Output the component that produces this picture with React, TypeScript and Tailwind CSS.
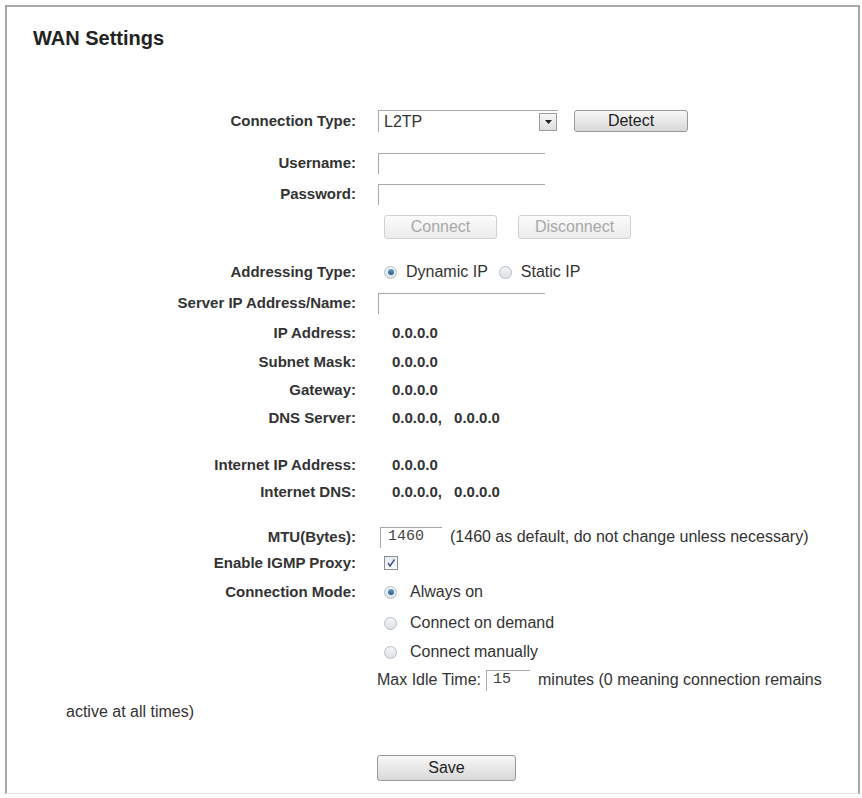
import React from "react";

const font = { fontFamily: '"Liberation Sans", Arial, sans-serif' };
const mono = { fontFamily: '"Liberation Mono", "Courier New", monospace' };

function Label({ children }: { children: React.ReactNode }) {
  return (
    <div className="w-[349px] shrink-0 text-right text-[15px] font-bold text-[#333]">
      {children}
    </div>
  );
}

function Row({
  label,
  children,
  className = "",
}: {
  label?: React.ReactNode;
  children?: React.ReactNode;
  className?: string;
}) {
  return (
    <div className={`flex h-6 items-center ${className}`}>
      <Label>{label}</Label>
      <div className="ml-[22px] flex items-center text-[16px] text-[#333]">{children}</div>
    </div>
  );
}

function Radio({ checked = false }: { checked?: boolean }) {
  return (
    <span className="flex h-[13px] w-[13px] shrink-0 items-center justify-center rounded-full border border-[#b4bec8] bg-gradient-to-b from-[#f4f4f4] to-[#dde2e6]">
      {checked && (
        <span className="h-[6px] w-[6px] rounded-full bg-gradient-to-b from-[#6a9cc6] to-[#2a5c8b]" />
      )}
    </span>
  );
}

function TextBox({
  width,
  value = "",
  pad = "pl-[8px]",
}: {
  width: string;
  value?: string;
  pad?: string;
}) {
  return (
    <div
      className={`flex h-[21px] items-center border-l border-t border-[#a9a9a9] text-[15px] text-[#444] ${pad} ${width}`}
      style={mono}
    >
      {value}
    </div>
  );
}

function Button({
  children,
  width,
  disabled = false,
  height = "h-[22px]",
}: {
  children: React.ReactNode;
  width: string;
  disabled?: boolean;
  height?: string;
}) {
  return (
    <div
      className={`flex items-center justify-center rounded-[3px] border text-[16px] ${height} ${width} ${
        disabled
          ? "border-[#d0d0d0] bg-gradient-to-b from-[#fbfbfb] to-[#ececec] text-[#a8a8a8]"
          : "border-[#999] bg-gradient-to-b from-[#f8f8f8] to-[#d8d8d8] text-[#222]"
      }`}
    >
      {children}
    </div>
  );
}

export default function App() {
  return (
    <div className="h-[798px] w-[862px] bg-white" style={font}>
      <div className="ml-[5px] mt-[5px] h-[789px] w-[855px] border-2 border-b border-[#a8a8a8] border-b-[#e2e2e2] pt-[19px]">
        {/* page title */}
        <div className="flex h-6 items-center pl-[26px] text-[20px] font-bold text-[#222]">
          WAN Settings
        </div>

        <Row label="Connection Type:" className="mt-[59px]">
          <div className="flex h-[22px] w-[180px] items-center justify-between border-l border-t border-[#a9a9a9] pl-[5px] pr-[1px]">
            <span className="text-[16px] text-[#333]">L2TP</span>
            <span className="flex h-[18px] w-[18px] items-center justify-center border border-[#9c9c9c] bg-gradient-to-b from-[#f7f7f7] to-[#dedede]">
              <svg width="7" height="4" viewBox="0 0 7 4">
                <path d="M0 0h7L3.5 4z" fill="#222" />
              </svg>
            </span>
          </div>
          <div className="ml-[16px]">
            <Button width="w-[114px]">Detect</Button>
          </div>
        </Row>

        <Row label="Username:" className="mt-[18px]">
          <TextBox width="w-[167px]" />
        </Row>
        <Row label="Password:" className="mt-[7px]">
          <TextBox width="w-[167px]" />
        </Row>

        <Row className="mt-[9px]">
          <div className="ml-[6px] flex gap-[21px]">
            <Button width="w-[113px]" height="h-[24px]" disabled>
              Connect
            </Button>
            <Button width="w-[113px]" height="h-[24px]" disabled>
              Disconnect
            </Button>
          </div>
        </Row>

        <Row label="Addressing Type:" className="mt-[21px]">
          <div className="ml-[6px] flex items-center">
            <Radio checked />
            <span className="ml-[9px]">Dynamic IP</span>
            <span className="ml-[11px]">
              <Radio />
            </span>
            <span className="ml-[9px]">Static IP</span>
          </div>
        </Row>

        <Row label="Server IP Address/Name:" className="mt-[7px]">
          <TextBox width="w-[167px]" />
        </Row>

        <Row label="IP Address:" className="mt-[6px]">
          <span className="pl-[14px] text-[15px] font-bold">0.0.0.0</span>
        </Row>
        <Row label="Subnet Mask:" className="mt-[5px]">
          <span className="pl-[14px] text-[15px] font-bold">0.0.0.0</span>
        </Row>
        <Row label="Gateway:" className="mt-1">
          <span className="pl-[14px] text-[15px] font-bold">0.0.0.0</span>
        </Row>
        <Row label="DNS Server:" className="mt-1">
          <span className="pl-[14px] text-[15px] font-bold">0.0.0.0,</span>
          <span className="ml-[12px] text-[15px] font-bold">0.0.0.0</span>
        </Row>

        <Row label="Internet IP Address:" className="mt-[23px]">
          <span className="pl-[14px] text-[15px] font-bold">0.0.0.0</span>
        </Row>
        <Row label="Internet DNS:" className="mt-[3px]">
          <span className="pl-[14px] text-[15px] font-bold">0.0.0.0,</span>
          <span className="ml-[12px] text-[15px] font-bold">0.0.0.0</span>
        </Row>

        <Row label="MTU(Bytes):" className="mt-[21px]">
          <div className="ml-[2px]">
            <TextBox width="w-[62px]" value="1460" pad="pl-[7px]" />
          </div>
          <span className="ml-[8px]">(1460 as default, do not change unless necessary)</span>
        </Row>

        <Row label="Enable IGMP Proxy:" className="mt-[2px]">
          <span className="ml-[6px] flex h-[14px] w-[14px] items-center justify-center border border-[#8e8f8f] bg-gradient-to-b from-[#e4e9f3] to-[#fbfcfe]">
            <svg width="10" height="10" viewBox="0 0 10 10">
              <path d="M2 5l2 3 4.5-6.5" fill="none" stroke="#3d4f8f" strokeWidth="1.4" />
            </svg>
          </span>
        </Row>

        <Row label="Connection Mode:" className="mt-[5px]">
          <div className="ml-[6px] flex items-center">
            <Radio checked />
            <span className="ml-[13px]">Always on</span>
          </div>
        </Row>
        <Row className="mt-[7px]">
          <div className="ml-[6px] flex items-center">
            <Radio />
            <span className="ml-[13px]">Connect on demand</span>
          </div>
        </Row>
        <Row className="mt-[5px]">
          <div className="ml-[6px] flex items-center">
            <Radio />
            <span className="ml-[13px]">Connect manually</span>
          </div>
        </Row>
        <Row className="mt-1">
          <span className="-ml-px">Max Idle Time:</span>
          <div className="ml-[5px]">
            <TextBox width="w-[44px]" value="15" pad="pl-[6px]" />
          </div>
          <span className="ml-[8px] whitespace-nowrap">minutes (0 meaning connection remains</span>
        </Row>
        <div className="mt-[8px] flex h-6 items-center pl-[59px] text-[16px] text-[#333]">
          active at all times)
        </div>

        <Row className="mt-[32px]">
          <div className="-ml-px">
            <Button width="w-[139px]" height="h-[26px]">
              Save
            </Button>
          </div>
        </Row>
      </div>
    </div>
  );
}
